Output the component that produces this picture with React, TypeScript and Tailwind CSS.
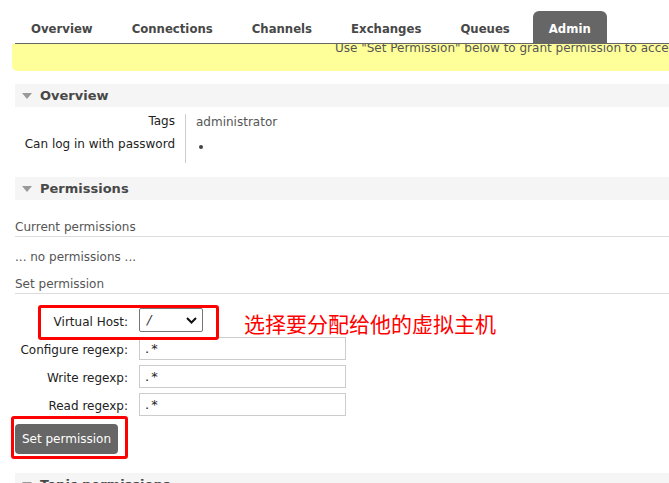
import React from 'react';

const TABS = ['Overview', 'Connections', 'Channels', 'Exchanges', 'Queues', 'Admin'];

function SectionHeader({ title }: { title: string }) {
  return (
    <div className="flex items-center h-[23px] bg-[#f5f5f5] pl-[7px] text-[13px] font-bold text-[#484848]">
      <svg width="10" height="6" viewBox="0 0 10 6" className="mr-[8px]" aria-hidden="true">
        <path d="M0 0 L10 0 L5 6 Z" fill="#999" />
      </svg>
      {title}
    </div>
  );
}

function FieldRow({ label, children }: { label: string; children: React.ReactNode }) {
  return (
    <div className="flex items-center h-[28px]">
      <label className="w-[128px] text-right text-[12px] leading-[14px] text-[#222]">{label}</label>
      <div className="ml-[11px]">{children}</div>
    </div>
  );
}

function RegexpInput() {
  return (
    <div className="w-[207px] h-[23px] mb-[3px] border border-[#ccc] bg-white flex items-center pl-[5px] text-[13px] tracking-[2px] text-[#222]">
      .*
    </div>
  );
}

export default function App() {
  return (
    <div className="w-[669px] h-[483px] overflow-hidden bg-white text-[#444] font-['DejaVu_Sans',Verdana,sans-serif]">
      {/* Tabs */}
      <div className="ml-[15px] flex items-end gap-[7px] h-[44px] border-b border-[#666]">
        {TABS.map((t) => (
          <div
            key={t}
            className={`h-[32px] flex items-center pt-[4px] px-[16px] font-['DejaVu_Sans_Condensed',sans-serif] font-bold text-[13px] rounded-t-[6px] ${
              t === 'Admin' ? 'bg-[#666] text-white' : 'text-[#484848]'
            }`}
          >
            {t}
          </div>
        ))}
      </div>

      {/* Notice */}
      <div className="ml-[12px] h-[27px] bg-[#ffff99] rounded-bl-[5px] pl-[323px] overflow-hidden whitespace-nowrap text-[12px] leading-[9px] text-[#555]">
        Use "Set Permission" below to grant permission to access virtual hosts.
      </div>

      {/* Overview */}
      <div className="ml-[15px] mt-[13px]">
        <SectionHeader title="Overview" />
        <div className="flex mt-[7px] text-[12px] leading-[14px]">
          <div className="w-[171px] h-[49px] text-right pr-[10px] border-r border-[#ccc] flex flex-col gap-[9px] text-[#222]">
            <div>Tags</div>
            <div>Can log in with password</div>
          </div>
          <div className="pl-[10px] pt-[1px] text-[#555]">
            <div>administrator</div>
            <div className="ml-[3px] mt-[16px] w-[4px] h-[4px] rounded-full bg-[#444]" />
          </div>
        </div>
      </div>

      {/* Permissions */}
      <div className="ml-[15px] mt-[14px]">
        <SectionHeader title="Permissions" />
        <div className="mt-[20px] text-[12px] leading-[14px] text-[#555] pb-[2px] border-b border-[#ddd]">Current permissions</div>
        <div className="mt-[13px] text-[12px] leading-[14px] text-[#555]">... no permissions ...</div>
        <div className="mt-[13px] text-[12px] leading-[14px] text-[#555] pb-[2px] border-b border-[#ddd]">Set permission</div>

        <div className="mt-[14px] ml-[-15px] flex flex-col">
          <div className="relative">
            <div className="absolute left-[38px] top-[-3px] w-[181px] h-[35px] border-[3px] border-[#f00] rounded-[3px]" />
            <div className="absolute left-[244px] top-[2px] text-[21px] text-[#f00] font-['Noto_Sans_CJK_SC',sans-serif] leading-[26px] whitespace-nowrap">
              选择要分配给他的虚拟主机
            </div>
            <FieldRow label="Virtual Host:">
              <div className="w-[64px] h-[24px] mb-[4px] border border-[#767676] rounded-[2px] bg-white flex items-center justify-between pl-[7px] pr-[5px] text-[13px] text-[#222]">
                <span className="italic text-[#333]">/</span>
                <svg width="11" height="7" viewBox="0 0 11 7" aria-hidden="true">
                  <path d="M1 1 L5.5 5.5 L10 1" stroke="#111" strokeWidth="2" fill="none" />
                </svg>
              </div>
            </FieldRow>
          </div>
          <FieldRow label="Configure regexp:">
            <RegexpInput />
          </FieldRow>
          <FieldRow label="Write regexp:">
            <RegexpInput />
          </FieldRow>
          <FieldRow label="Read regexp:">
            <RegexpInput />
          </FieldRow>
          <div className="mt-[-4px] ml-[11px] w-[117px] h-[43px] border-[3px] border-[#f00] rounded-[3px] flex items-start pt-[5px] pl-[1px]">
            <button className="w-[103px] h-[30px] bg-[#666] text-white text-[12px] rounded-[4px]">Set permission</button>
          </div>
        </div>
      </div>

      {/* Topic permissions */}
      <div className="ml-[15px] mt-[14px]">
        <SectionHeader title="Topic permissions" />
      </div>
    </div>
  );
}
